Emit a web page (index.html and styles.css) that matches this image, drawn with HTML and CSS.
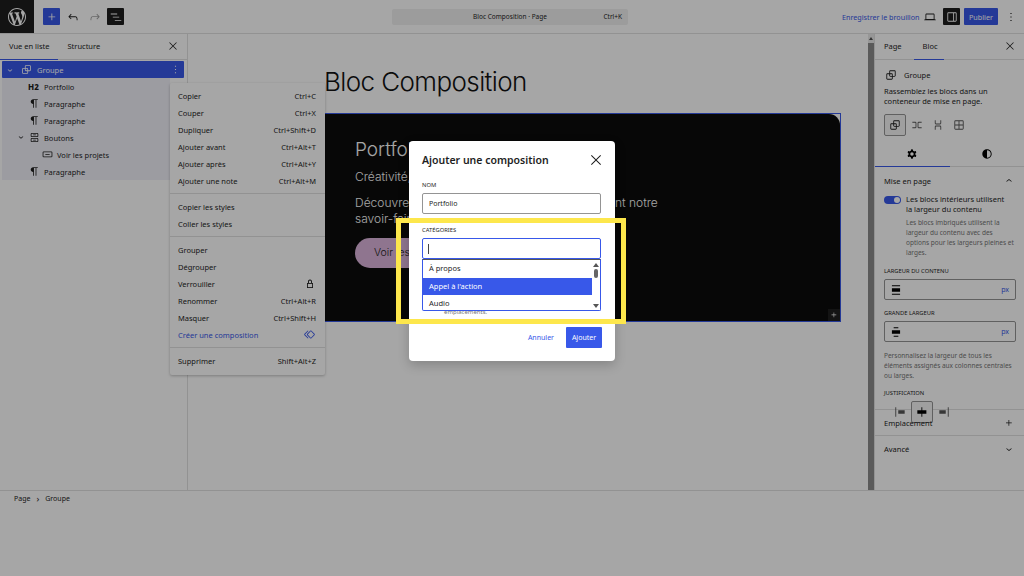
FILE: index.html
```html
<!DOCTYPE html>
<html lang="fr">
<head>
<meta charset="utf-8">
<title>Bloc Composition</title>
<link rel="stylesheet" href="styles.css">
</head>
<body>
<svg class="sprite" xmlns="http://www.w3.org/2000/svg">
<symbol id="i-plus" viewBox="0 0 24 24"><path d="M11 12.5V17.5H12.5V12.5H17.5V11H12.5V6H11V11H6V12.5H11Z"/></symbol>
<symbol id="i-undo" viewBox="0 0 24 24"><path d="M18.3 11.7c-.6-.6-1.4-.9-2.3-.9H6.7l2.9-3.3-1.1-1-4.5 5L8.5 16l1-1-2.7-2.7H16c.5 0 .9.2 1.3.5 1 1 1 3.4 1 4.5v.3h1.5v-.2c0-1.5 0-4.3-1.5-5.7z"/></symbol>
<symbol id="i-redo" viewBox="0 0 24 24"><path d="M15.6 6.5l-1.1 1 2.9 3.3H8c-.9 0-1.7.3-2.3.9-1.4 1.5-1.4 4.2-1.4 5.6v.2h1.5v-.3c0-1.1 0-3.5 1-4.5.3-.3.7-.5 1.3-.5h9.2L14.5 15l1.1 1.1 4.6-4.6-4.6-5z"/></symbol>
<symbol id="i-list" viewBox="0 0 24 24"><path d="M3 6h11v1.5H3V6Zm3.5 5.5h11V13h-11v-1.5ZM21 17H10v1.5h11V17Z"/></symbol>
<symbol id="i-close" viewBox="0 0 24 24"><path d="m13.06 12 6.47-6.47-1.06-1.06L12 10.94 5.53 4.47 4.47 5.53 10.94 12l-6.47 6.47 1.06 1.06L12 13.06l6.47 6.47 1.06-1.06L13.06 12Z"/></symbol>
<symbol id="i-down" viewBox="0 0 24 24"><path d="M17.5 11.6L12 16l-5.5-4.4.9-1.2L12 14l4.5-3.6 1 1.2z"/></symbol>
<symbol id="i-up" viewBox="0 0 24 24"><path d="M6.5 12.4L12 8l5.5 4.4-.9 1.2L12 10l-4.5 3.6-1-1.2z"/></symbol>
<symbol id="i-para" viewBox="0 0 24 24"><path d="M9.5 4C7 4 5 6 5 8.5S7 13 9.5 13v7H11V5.5h3V20h1.5V5.5H18V4z"/></symbol>
<symbol id="i-group" viewBox="0 0 24 24"><path d="M18 4h-7c-1.1 0-2 .9-2 2v3H6c-1.1 0-2 .9-2 2v7c0 1.1.9 2 2 2h7c1.1 0 2-.9 2-2v-3h3c1.1 0 2-.9 2-2V6c0-1.1-.9-2-2-2zm-4.5 14c0 .3-.2.5-.5.5H6c-.3 0-.5-.2-.5-.5v-7c0-.3.2-.5.5-.5h3V13c0 1.1.9 2 2 2h2.5v3zm0-4.5H11c-.3 0-.5-.2-.5-.5v-2.5H13c.3 0 .5.2.5.5v2.5zm5-.5c0 .3-.2.5-.5.5h-3V11c0-1.1-.9-2-2-2h-2.5V6c0-.3.2-.5.5-.5h7c.3 0 .5.2.5.5v7z"/></symbol>
<symbol id="i-buttons" viewBox="0 0 24 24"><path d="M14.5 17.5H9.5V16H14.5V17.5Z M14.5 8H9.5V6.5H14.5V8Z M7 3.5H17C18.1 3.5 19 4.4 19 5.5V9C19 10.1 18.1 11 17 11H7C5.9 11 5 10.1 5 9V5.5C5 4.4 5.9 3.5 7 3.5ZM17 5H7C6.7 5 6.5 5.2 6.5 5.5V9C6.5 9.3 6.7 9.5 7 9.5H17C17.3 9.5 17.5 9.3 17.5 9V5.5C17.5 5.2 17.3 5 17 5Z M7 13H17C18.1 13 19 13.9 19 15V18.5C19 19.6 18.1 20.5 17 20.5H7C5.9 20.5 5 19.6 5 18.5V15C5 13.9 5.9 13 7 13ZM17 14.5H7C6.7 14.5 6.5 14.7 6.5 15V18.5C6.5 18.8 6.7 19 7 19H17C17.3 19 17.5 18.8 17.5 18.5V15C17.5 14.7 17.3 14.5 17 14.5Z"/></symbol>
<symbol id="i-button" viewBox="0 0 24 24"><path d="M8 12.5h8V11H8v1.5Z M19 6.5H5a2 2 0 0 0-2 2V15a2 2 0 0 0 2 2h14a2 2 0 0 0 2-2V8.5a2 2 0 0 0-2-2ZM5 8h14a.5.5 0 0 1 .5.5V15a.5.5 0 0 1-.5.5H5a.5.5 0 0 1-.5-.5V8.5A.5.5 0 0 1 5 8Z"/></symbol>
<symbol id="i-lock" viewBox="0 0 24 24"><path d="M17 10h-1.2V7c0-2.1-1.7-3.8-3.8-3.8-2.1 0-3.8 1.7-3.8 3.8v3H7c-.6 0-1 .4-1 1v8c0 .6.4 1 1 1h10c.6 0 1-.4 1-1v-8c0-.6-.4-1-1-1zM9.8 7c0-1.2 1-2.2 2.2-2.2 1.2 0 2.2 1 2.2 2.2v3H9.8V7zm6.7 11.5h-9v-7h9v7z"/></symbol>
<symbol id="i-symbol" viewBox="0 0 24 24"><path d="M21.3 10.8l-5.6-5.6c-.7-.7-1.8-.7-2.5 0l-5.6 5.6c-.7.7-.7 1.8 0 2.5l5.6 5.6c.3.3.8.5 1.2.5s.9-.2 1.2-.5l5.6-5.6c.8-.7.8-1.9.1-2.5zm-1 1.4l-5.6 5.6c-.1.1-.3.1-.4 0l-5.6-5.6c-.1-.1-.1-.3 0-.4l5.6-5.6s.1-.1.2-.1.1 0 .2.1l5.6 5.6c.1.1.1.3 0 .4zm-16.6-.4L10 5.5l-1-1-6.3 6.3c-.7.7-.7 1.8 0 2.5L9 19.5l1.1-1.1-6.3-6.3c-.2 0-.2-.2-.1-.3z"/></symbol>
<symbol id="i-more" viewBox="0 0 24 24"><path d="M13 19h-2v-2h2v2zm0-6h-2v-2h2v2zm0-6h-2V5h2v2z"/></symbol>
<symbol id="i-drawer" viewBox="0 0 24 24"><path d="M18 4H6c-1.1 0-2 .9-2 2v12c0 1.1.9 2 2 2h12c1.1 0 2-.9 2-2V6c0-1.1-.9-2-2-2zM5.5 18V6c0-.3.2-.5.5-.5h8v13H6c-.3 0-.5-.2-.5-.5zm13 0c0 .3-.2.5-.5.5h-2.500v-13H18c.3 0 .5.2.5.5v12z"/></symbol>
<symbol id="i-laptop" viewBox="0 0 24 24"><path d="M20.5 16h-.7V8c0-1.1-.9-2-2-2H6.200c-1.100 0-2 .9-2 2v8h-.7c-.8 0-1.500.7-1.500 1.500h20c0-.8-.7-1.500-1.500-1.500zM5.700 8c0-.3.2-.5.5-.5h11.600c.3 0 .5.2.5.5v7.600H5.700V8z"/></symbol>
<symbol id="i-gear" viewBox="0 0 24 24"><path fill-rule="evenodd" d="M10.289 4.836A1 1 0 0 1 11.275 4h1.306a1 1 0 0 1 .987.836l.244 1.466c.787.26 1.503.679 2.108 1.218l1.393-.522a1 1 0 0 1 1.216.437l.653 1.13a1 1 0 0 1-.23 1.273l-1.148.944a6.025 6.025 0 0 1 0 2.435l1.149.946a1 1 0 0 1 .23 1.272l-.653 1.13a1 1 0 0 1-1.216.437l-1.394-.522c-.605.54-1.32.958-2.108 1.218l-.244 1.466a1 1 0 0 1-.987.836h-1.306a1 1 0 0 1-.986-.836l-.244-1.466a5.995 5.995 0 0 1-2.108-1.218l-1.394.522a1 1 0 0 1-1.217-.436l-.653-1.131a1 1 0 0 1 .23-1.272l1.149-.946a6.026 6.026 0 0 1 0-2.435l-1.148-.944a1 1 0 0 1-.23-1.272l.653-1.131a1 1 0 0 1 1.217-.437l1.393.522a5.994 5.994 0 0 1 2.108-1.218l.244-1.466ZM14.929 12a3 3 0 1 1-6 0 3 3 0 0 1 6 0Z"/></symbol>
<symbol id="i-half" viewBox="0 0 24 24"><path d="M12 4c-4.400 0-8 3.600-8 8s3.600 8 8 8 8-3.600 8-8-3.600-8-8-8zm0 14.500V5.500c3.600 0 6.500 2.900 6.500 6.500s-2.900 6.500-6.500 6.500z"/></symbol>
<symbol id="i-row" viewBox="0 0 24 24"><path d="M4 6.500h5a2 2 0 0 1 2 2v7a2 2 0 0 1-2 2H4V16h5a.5.5 0 0 0 .5-.5v-7A.5.5 0 0 0 9 8H4V6.500Zm16 0h-5a2 2 0 0 0-2 2v7a2 2 0 0 0 2 2h5V16h-5a.5.5 0 0 1-.5-.5v-7A.5.5 0 0 1 15 8h5V6.500Z"/></symbol>
<symbol id="i-stack" viewBox="0 0 24 24"><path d="M17.500 4v5a2 2 0 0 1-2 2h-7a2 2 0 0 1-2-2V4H8v5a.5.5 0 0 0 .5.5h7A.5.5 0 0 0 16 9V4h1.500Zm0 16v-5a2 2 0 0 0-2-2h-7a2 2 0 0 0-2 2v5H8v-5a.5.5 0 0 1 .5-.5h7a.5.5 0 0 1 .5.5v5h1.500Z"/></symbol>
<symbol id="i-grid" viewBox="0 0 24 24"><path fill-rule="evenodd" d="M4 6a2 2 0 0 1 2-2h12a2 2 0 0 1 2 2v12a2 2 0 0 1-2 2H6a2 2 0 0 1-2-2V6Zm2-.5h5.250v5.750H5.500V6a.5.5 0 0 1 .5-.5Zm-.5 7.250V18a.5.5 0 0 0 .5.5h5.250v-5.750H5.500Zm7.250 5.750H18a.5.5 0 0 0 .5-.5v-5.250h-5.750v5.750Zm5.750-7.250h-5.750V5.500H18a.5.5 0 0 1 .5.5v5.250Z"/></symbol>
<symbol id="i-jleft" viewBox="0 0 24 24"><path d="M9 9v6h11V9H9zM4 20h1.500V4H4v16z"/></symbol>
<symbol id="i-jcenter" viewBox="0 0 24 24"><path d="M12.500 15v5H11v-5H4V9h7V4h1.500v5h7v6h-7Z"/></symbol>
<symbol id="i-jright" viewBox="0 0 24 24"><path d="M4 15h11V9H4v6zM18.500 4v16H20V4h-1.500z"/></symbol>
<symbol id="i-content" viewBox="0 0 24 24"><path d="M19 5.500H5V4h14v1.500ZM19 20H5v-1.500h14V20ZM5 9h14v6H5V9Z"/></symbol>
<symbol id="i-wide" viewBox="0 0 24 24"><path d="M16 5.500H8V4h8v1.500ZM16 20H8v-1.500h8V20ZM5 9h14v6H5V9Z"/></symbol>
<symbol id="i-wp" viewBox="0 0 20 20"><path d="M20 10c0-5.510-4.490-10-10-10C4.480 0 0 4.490 0 10c0 5.520 4.480 10 10 10 5.510 0 10-4.480 10-10zM7.780 15.370L4.370 6.220c.55-.02 1.170-.08 1.170-.08.5-.06.44-1.130-.06-1.110 0 0-1.450.11-2.370.11-.18 0-.37 0-.58-.01C4.120 2.690 6.870 1.110 10 1.110c2.330 0 4.450.87 6.050 2.340-.68-.11-1.650.39-1.650 1.580 0 .74.45 1.360.9 2.100.35.61.55 1.360.55 2.460 0 1.490-1.400 5-1.400 5l-3.030-8.370c.54-.02.82-.17.82-.17.5-.05.44-1.250-.06-1.220 0 0-1.440.12-2.380.12-.87 0-2.330-.12-2.330-.12-.5-.03-.56 1.200-.06 1.220l.92.08 1.260 3.410zM17.410 10c.24-.64.74-1.870.43-4.250.7 1.290 1.050 2.710 1.050 4.250 0 3.290-1.730 6.240-4.400 7.780.97-2.590 1.940-5.200 2.920-7.780zM6.100 18.090C3.120 16.650 1.110 13.530 1.110 10c0-1.300.23-2.480.72-3.590C3.250 10.300 4.670 14.200 6.100 18.090zm4.030-6.630l2.580 6.980c-.86.29-1.760.45-2.710.45-.79 0-1.570-.11-2.290-.33.81-2.380 1.620-4.740 2.420-7.100z"/></symbol>
</svg>

<div class="app">
  <header class="topbar">
    <a class="logo"><svg class="ic ic-logo"><use href="#i-wp"/></svg></a>
    <div class="tools">
      <button class="tbtn tbtn-blue"><svg class="ic ic-14"><use href="#i-plus"/></svg></button>
      <button class="tbtn tbtn-undo"><svg class="ic ic-14"><use href="#i-undo"/></svg></button>
      <button class="tbtn tbtn-redo"><svg class="ic ic-14"><use href="#i-redo"/></svg></button>
      <button class="tbtn tbtn-dark"><svg class="ic ic-14"><use href="#i-list"/></svg></button>
    </div>
    <div class="command">
      <span class="command-title">Bloc Composition · Page</span>
      <span class="command-key">Ctrl+K</span>
    </div>
    <div class="actions">
      <a class="save">Enregistrer le brouillon</a>
      <svg class="ic ic-14 laptop"><use href="#i-laptop"/></svg>
      <button class="tbtn tbtn-dark"><svg class="ic ic-14"><use href="#i-drawer"/></svg></button>
      <button class="publish">Publier</button>
      <svg class="ic ic-14 kebab"><use href="#i-more"/></svg>
    </div>
  </header>

  <div class="workspace">
    <aside class="left">
      <div class="tabs">
        <span class="tab tab-on">Vue en liste</span>
        <span class="tab">Structure</span>
        <svg class="ic ic-12 tabs-close"><use href="#i-close"/></svg>
      </div>
      <ul class="tree">
        <li class="node node-sel"><svg class="ic ic-10 caret"><use href="#i-down"/></svg><svg class="ic ic-13"><use href="#i-group"/></svg><span>Groupe</span><svg class="ic ic-13 node-more"><use href="#i-more"/></svg></li>
        <li class="node lvl2"><b class="h2">H2</b><span>Portfolio</span></li>
        <li class="node lvl2"><svg class="ic ic-13"><use href="#i-para"/></svg><span>Paragraphe</span></li>
        <li class="node lvl2"><svg class="ic ic-13"><use href="#i-para"/></svg><span>Paragraphe</span></li>
        <li class="node lvl2"><svg class="ic ic-10 caret-in"><use href="#i-down"/></svg><svg class="ic ic-13"><use href="#i-buttons"/></svg><span>Boutons</span></li>
        <li class="node lvl3"><svg class="ic ic-13"><use href="#i-button"/></svg><span>Voir les projets</span></li>
        <li class="node lvl2"><svg class="ic ic-13"><use href="#i-para"/></svg><span>Paragraphe</span></li>
      </ul>
    </aside>

    <main class="canvas">
      <div class="doc">
        <h1 class="doc-title">Bloc Composition</h1>
        <section class="cover">
          <h2 class="cover-h">Portfolio</h2>
          <p class="cover-lead">Créativité, passion et expertise</p>
          <p class="cover-text">Découvrez nos réalisations, qui mettent en avant notre savoir-faire.</p>
          <a class="cover-btn">Voir les projets</a>
          <span class="cover-add"><svg class="ic ic-10"><use href="#i-plus"/></svg></span>
        </section>
      </div>
      <div class="scroll"><i class="scroll-arrow"></i><i class="scroll-thumb"></i></div>
    </main>

    <aside class="right">
      <div class="tabs tabs-r">
        <span class="tab">Page</span>
        <span class="tab tab-on">Bloc</span>
        <svg class="ic ic-12 tabs-close"><use href="#i-close"/></svg>
      </div>
      <div class="card">
        <div class="card-head"><svg class="ic ic-14"><use href="#i-group"/></svg><span>Groupe</span></div>
        <p class="card-desc">Rassemblez les blocs dans un conteneur de mise en page.</p>
        <div class="variants">
          <span class="vbtn vbtn-on"><svg class="ic ic-14"><use href="#i-group"/></svg></span>
          <span class="vbtn"><svg class="ic ic-14"><use href="#i-row"/></svg></span>
          <span class="vbtn"><svg class="ic ic-14"><use href="#i-stack"/></svg></span>
          <span class="vbtn"><svg class="ic ic-14"><use href="#i-grid"/></svg></span>
        </div>
      </div>
      <div class="subtabs">
        <span class="subtab subtab-on"><svg class="ic ic-14 dark"><use href="#i-gear"/></svg></span>
        <span class="subtab"><svg class="ic ic-14 dark"><use href="#i-half"/></svg></span>
      </div>
      <section class="panel">
        <div class="panel-head"><span>Mise en page</span><svg class="ic ic-12"><use href="#i-up"/></svg></div>
        <div class="toggle-row">
          <span class="toggle"><i></i></span>
          <div>
            <p class="toggle-label">Les blocs intérieurs utilisent la largeur du contenu</p>
            <p class="help">Les blocs imbriqués utilisent la largeur du contenu avec des options pour les largeurs pleines et larges.</p>
          </div>
        </div>
        <label class="cap">Largeur du contenu</label>
        <div class="field"><svg class="ic ic-14 dark"><use href="#i-content"/></svg><span class="px">px</span></div>
        <label class="cap">Grande largeur</label>
        <div class="field"><svg class="ic ic-14 dark"><use href="#i-wide"/></svg><span class="px">px</span></div>
        <p class="help help-wide">Personnalisez la largeur de tous les éléments assignés aux colonnes centrales ou larges.</p>
        <label class="cap cap-j">Justification</label>
        <div class="justify">
          <span class="jbtn"><svg class="ic ic-14"><use href="#i-jleft"/></svg></span>
          <span class="jbtn jbtn-on"><svg class="ic ic-14 dark"><use href="#i-jcenter"/></svg></span>
          <span class="jbtn"><svg class="ic ic-14"><use href="#i-jright"/></svg></span>
        </div>
      </section>
      <div class="fold"><span>Emplacement</span><svg class="ic ic-12"><use href="#i-plus"/></svg></div>
      <div class="fold"><span>Avancé</span><svg class="ic ic-12"><use href="#i-down"/></svg></div>
    </aside>
  </div>

  <footer class="crumbs"><span>Page</span><span class="crumb-sep">›</span><span>Groupe</span></footer>
</div>

<nav class="menu">
  <ul class="menu-group">
    <li><span>Copier</span><kbd>Ctrl+C</kbd></li>
    <li><span>Couper</span><kbd>Ctrl+X</kbd></li>
    <li><span>Dupliquer</span><kbd>Ctrl+Shift+D</kbd></li>
    <li><span>Ajouter avant</span><kbd>Ctrl+Alt+T</kbd></li>
    <li><span>Ajouter après</span><kbd>Ctrl+Alt+Y</kbd></li>
    <li><span>Ajouter une note</span><kbd>Ctrl+Alt+M</kbd></li>
  </ul>
  <ul class="menu-group">
    <li><span>Copier les styles</span></li>
    <li><span>Coller les styles</span></li>
  </ul>
  <ul class="menu-group">
    <li><span>Grouper</span></li>
    <li><span>Dégrouper</span></li>
    <li><span>Verrouiller</span><svg class="ic ic-12 dark"><use href="#i-lock"/></svg></li>
    <li><span>Renommer</span><kbd>Ctrl+Alt+R</kbd></li>
    <li><span>Masquer</span><kbd>Ctrl+Shift+H</kbd></li>
    <li class="menu-accent"><span>Créer une composition</span><svg class="ic ic-13"><use href="#i-symbol"/></svg></li>
  </ul>
  <ul class="menu-group">
    <li><span>Supprimer</span><kbd>Shift+Alt+Z</kbd></li>
  </ul>
</nav>

<div class="scrim"></div>

<div class="modal">
  <div class="modal-head"><h3>Ajouter une composition</h3><svg class="ic ic-16"><use href="#i-close"/></svg></div>
  <label class="m-cap">Nom</label>
  <div class="m-input">Portfolio</div>
  <label class="m-cap m-cap-cat">Catégories</label>
  <div class="m-input m-input-focus"><i class="cursor"></i></div>
  <div class="dropdown">
    <ul class="options">
      <li>À propos</li>
      <li class="opt-on">Appel à l'action</li>
      <li>Audio</li>
    </ul>
    <div class="dd-scroll"><i class="dd-up"></i><i class="dd-thumb"></i><i class="dd-down"></i></div>
  </div>
  <p class="m-hint">emplacements.</p>
  <div class="m-actions"><a class="m-cancel">Annuler</a><button class="m-add">Ajouter</button></div>
</div>

<div class="highlight"></div>
</body>
</html>
```

FILE: styles.css
```css
* { box-sizing: border-box; }
html, body { margin: 0; padding: 0; }
body {
  width: 1024px;
  height: 576px;
  overflow: hidden;
  position: relative;
  background: #fff;
  color: #1e1e1e;
  font-family: "Noto Sans", "Open Sans", sans-serif;
  font-size: 7.5px;
}
ul { list-style: none; margin: 0; padding: 0; }
p, h1, h2, h3 { margin: 0; }
button { border: 0; padding: 0; font: inherit; }
.sprite { display: none; }
.ic { display: block; flex: none; fill: currentColor; }
.ic-10 { width: 10px; height: 10px; }
.ic-12 { width: 12px; height: 12px; }
.ic-13 { width: 13px; height: 13px; }
.ic-14 { width: 14px; height: 14px; }
.ic-16 { width: 16px; height: 16px; }
.dark { color: #000; }

.app { display: flex; flex-direction: column; width: 1024px; height: 576px; }

/* top bar */
.topbar { display: flex; align-items: center; height: 34px; border-bottom: 1px solid #e0e0e0; flex: none; }
.logo { width: 34px; height: 33px; background: #1e1e1e; color: #fff; display: flex; align-items: center; justify-content: center; }
.ic-logo { width: 18px; height: 18px; }
.tools { display: flex; align-items: center; margin-left: 9px; }
.tbtn { width: 17px; height: 17px; border-radius: 1px; display: flex; align-items: center; justify-content: center; background: none; color: #1e1e1e; }
.tbtn-blue { background: #3858e9; color: #fff; }
.tbtn-undo { margin-left: 4px; }
.tbtn-redo { margin-left: 5px; color: #a0a0a0; }
.tbtn-dark { background: #1e1e1e; color: #fff; }
.tools .tbtn-dark { margin-left: 4px; }
.command { width: 236px; height: 16px; margin-left: 268px; background: #f0f0f0; border-radius: 2px; display: flex; align-items: center; font-size: 6.5px; position: relative; color: #1e1e1e; }
.command-title { width: 100%; text-align: center; }
.command-key { position: absolute; right: 6px; }
.actions { display: flex; align-items: center; margin-left: 214px; }
.save { color: #3858e9; font-size: 7.200px; width: 70px; white-space: nowrap; }
.laptop { margin-left: 11px; }
.actions .tbtn-dark { margin-left: 6px; }
.publish { margin-left: 4px; width: 34px; height: 17px; background: #3858e9; color: #fff; border-radius: 1px; font-size: 7.200px; }
.kebab { margin-left: 6px; }

.workspace { display: flex; height: 456px; flex: none; }

/* tabs */
.tabs { display: flex; align-items: center; height: 26px; border-bottom: 1px solid #e0e0e0; position: relative; }
.tab { height: 26px; line-height: 25px; padding: 0 9px; white-space: nowrap; color: #1e1e1e; }
.tab-on { box-shadow: inset 0 -1px 0 #3858e9; }
.tabs-close { position: absolute; right: 8px; top: 6px; }

/* left */
.left { width: 188px; flex: none; border-right: 1px solid #e0e0e0; }
.tree { margin: 1px 0 0 2px; width: 168px; background: #f0f0f8; }
.node { height: 17px; display: flex; align-items: center; gap: 3px; white-space: nowrap; position: relative; }
.node-sel { width: 182px; background: #3858e9; color: #fff; padding-left: 3px; border-radius: 1px; }
.node-sel .ic-13 { margin-left: 2px; }
.node-sel span { margin-left: 1px; }
.node-more { position: absolute; right: 2px; top: 2px; }
.lvl2 { padding-left: 26px; }
.lvl3 { padding-left: 39px; }
.h2 { width: 13px; font-size: 8px; font-weight: 800; letter-spacing: .2px; }
.caret-in { position: absolute; left: 14px; top: 3px; }

/* canvas */
.canvas { flex: 1; display: flex; position: relative; overflow: hidden; }
.doc { flex: 1; padding: 33px 0 0 136px; }
.doc-title { font-family: Inter, sans-serif; font-weight: 300; font-size: 26px; line-height: 30px; letter-spacing: -.6px; height: 46px; color: #111; }
.cover { position: relative; width: 517px; height: 209px; border: 1px solid #3858e9; background: #fff; }
.cover::before { content: ""; position: absolute; inset: 0; background: #0c0c0c; border-radius: 0 11px 0 0; }
.cover > * { position: relative; }
.cover-h { position: absolute; left: 30px; top: 24px; font-family: Inter, sans-serif; font-weight: 300; font-size: 19px; line-height: 23px; color: #fff; }
.cover-lead { position: absolute; left: 30px; top: 55px; font-family: Inter, sans-serif; font-weight: 300; font-size: 12px; line-height: 15px; color: #fff; }
.cover-text { position: absolute; left: 30px; top: 81px; width: 340px; font-family: Inter, sans-serif; font-weight: 300; font-size: 12px; line-height: 16px; color: #fff; }
.cover-btn { position: absolute; left: 30px; top: 124px; width: 122px; height: 30px; border-radius: 15px; background: #dcb4dc; color: #222; font-family: Inter, sans-serif; font-weight: 300; font-size: 10.500px; line-height: 30px; padding-left: 19px; }
.cover-add { position: absolute; right: 0; bottom: 0; width: 12px; height: 12px; background: #1e1e1e; color: #fff; display: flex; align-items: center; justify-content: center; }
.scroll { width: 6px; position: absolute; right: 0; top: 0; bottom: 0; background: #e8e8e8; }
.scroll-arrow { position: absolute; top: 3px; left: 1px; border: 2px solid transparent; border-bottom: 3px solid #505050; border-top: 0; }
.scroll-thumb { position: absolute; left: 0; right: 0; top: 9px; bottom: 0; background: #8a8a8a; }

/* right */
.right { width: 150px; flex: none; border-left: 1px solid #e0e0e0; }
.tabs-r .tab:first-child { padding-right: 10px; }
.tabs-r .tab-on { padding: 0 9px; width: 30px; }
.tabs-r .tab-on { margin-left: 2px; }
.card { padding: 8px 9px 0; height: 107px; border-bottom: 1px solid #e0e0e0; }
.card-head { display: flex; align-items: center; gap: 6px; height: 14px; margin-bottom: 4px; }
.card-desc { line-height: 10px; width: 125px; }
.variants { display: flex; margin-top: 8px; }
.vbtn { width: 22px; height: 22px; display: flex; align-items: center; justify-content: center; color: #555; margin-right: -1px; }
.vbtn-on { border: 1px solid #949494; border-radius: 2px; background: #f5f5f5; color: #1e1e1e; margin-right: 0; }
.subtabs { display: flex; height: 0; }
.subtabs { margin-top: -27px; height: 27px; }
.subtab { flex: 1; display: flex; align-items: center; justify-content: center; }
.subtab-on { box-shadow: inset 0 -1px 0 #3858e9; }
.panel { padding: 0 9px; height: 243px; border-bottom: 1px solid #e0e0e0; }
.panel-head { display: flex; justify-content: space-between; align-items: center; height: 27px; }
.panel-head span { font-size: 7.500px; }
.toggle-row { display: flex; gap: 5px; margin-top: 1px; }
.toggle { width: 17px; height: 8px; border-radius: 4px; background: #3858e9; position: relative; flex: none; margin-top: 1px; }
.toggle i { position: absolute; right: 1px; top: 1px; width: 6px; height: 6px; border-radius: 50%; background: #fff; }
.toggle-label { line-height: 9.500px; width: 105px; }
.help { font-size: 6.500px; line-height: 10px; color: #757575; margin-top: 4px; width: 110px; }
.cap { display: block; text-transform: uppercase; font-size: 5.800px; line-height: 8px; margin-top: 9px; color: #1e1e1e; }
.field { width: 132px; height: 21px; margin-top: 4px; border: 1px solid #949494; border-radius: 2px; display: flex; align-items: center; justify-content: space-between; padding: 0 6px 0 4px; }
.field + .cap { margin-top: 9px; }
.px { color: #3858e9; font-size: 7px; }
.help-wide { width: 132px; margin-top: 9px; }
.cap-j { margin-top: 8px; }
.justify { display: flex; margin: 4px 0 0 6px; }
.jbtn { width: 22px; height: 22px; display: flex; align-items: center; justify-content: center; color: #555; margin-right: -1px; }
.jbtn:first-child { margin-left: -1px; margin-right: 0; }
.jbtn-on { border: 1px solid #949494; border-radius: 2px; background: #f5f5f5; margin-right: 0; }
.fold { display: flex; justify-content: space-between; align-items: center; height: 26px; padding: 0 9px; border-bottom: 1px solid #e0e0e0; }
.fold:last-child { border-bottom: 0; }

/* footer */
.crumbs { display: flex; align-items: center; gap: 6px; height: 15px; padding-left: 14px; border-top: 1px solid #e0e0e0; margin-top: 0; flex: none; font-size: 7px; }
.crumb-sep { font-size: 9px; line-height: 9px; }

/* context menu */
.menu { position: absolute; left: 170px; top: 83px; width: 155px; height: 292px; background: #fff; border-radius: 2px; box-shadow: 0 1px 3px rgba(0,0,0,.25); }
.menu-group { padding: 4px 0 4px; border-bottom: 1px solid #e0e0e0; }
.menu-group:last-child { border-bottom: 0; }
.menu-group li { height: 17px; display: flex; align-items: center; justify-content: space-between; padding: 0 9px 0 8px; white-space: nowrap; }
kbd { font: inherit; color: #1e1e1e; }
.menu-accent { color: #3858e9; }

/* overlay */
.scrim { position: absolute; inset: 0; background: rgba(0,0,0,.35); }

/* modal */
.modal { position: absolute; left: 409px; top: 141px; width: 206px; height: 220px; background: #fff; border-radius: 4px; box-shadow: 0 4px 12px rgba(0,0,0,.2); padding: 0 13px; }
.modal-head { display: flex; justify-content: space-between; align-items: center; height: 38px; padding-right: 0; }
.modal-head h3 { font-size: 10.500px; font-weight: 600; }
.modal-head .ic { margin-right: -2px; }
.m-cap { display: block; text-transform: uppercase; font-size: 5.800px; line-height: 8px; margin-top: 2px; color: #1e1e1e; }
.m-cap-cat { margin-top: 12px; }
.m-input { width: 179px; height: 21px; margin-top: 4px; border: 1px solid #949494; border-radius: 2px; line-height: 20px; padding-left: 6px; font-size: 7px; position: relative; }
.m-input-focus { border-color: #3858e9; }
.cursor { position: absolute; left: 5px; top: 5px; width: 1px; height: 10px; background: #444; }
.dropdown { position: absolute; left: 13px; top: 118px; width: 179px; height: 52px; background: #fff; border: 1px solid #3858e9; border-top: 1px solid #555; border-radius: 0 0 2px 2px; display: flex; overflow: hidden; z-index: 2; }
.options { flex: 1; }
.options li { height: 17.500px; line-height: 17.500px; padding-left: 6px; font-size: 7.500px; }
.opt-on { background: #3858e9; color: #fff; }
.dd-scroll { width: 8px; position: relative; background: #fff; }
.dd-up { position: absolute; top: 3px; left: 1px; border: 3px solid transparent; border-top: 0; border-bottom: 4px solid #555; }
.dd-thumb { position: absolute; top: 9px; left: 2px; width: 4px; height: 9px; border-radius: 2px; background: #666; }
.dd-down { position: absolute; bottom: 2px; left: 1px; border: 3px solid transparent; border-bottom: 0; border-top: 4px solid #555; }
.m-hint { position: absolute; left: 35px; top: 167px; font-size: 6px; color: #757575; }
.m-actions { position: absolute; right: 13px; top: 186px; display: flex; align-items: center; gap: 12px; }
.m-cancel { color: #3858e9; font-size: 7px; }
.m-add { width: 36px; height: 21px; background: #3858e9; color: #fff; border-radius: 1px; font-size: 7px; }

/* annotation */
.highlight { position: absolute; left: 396px; top: 218px; width: 230px; height: 106px; border: 5px solid #fde74c; }
```
